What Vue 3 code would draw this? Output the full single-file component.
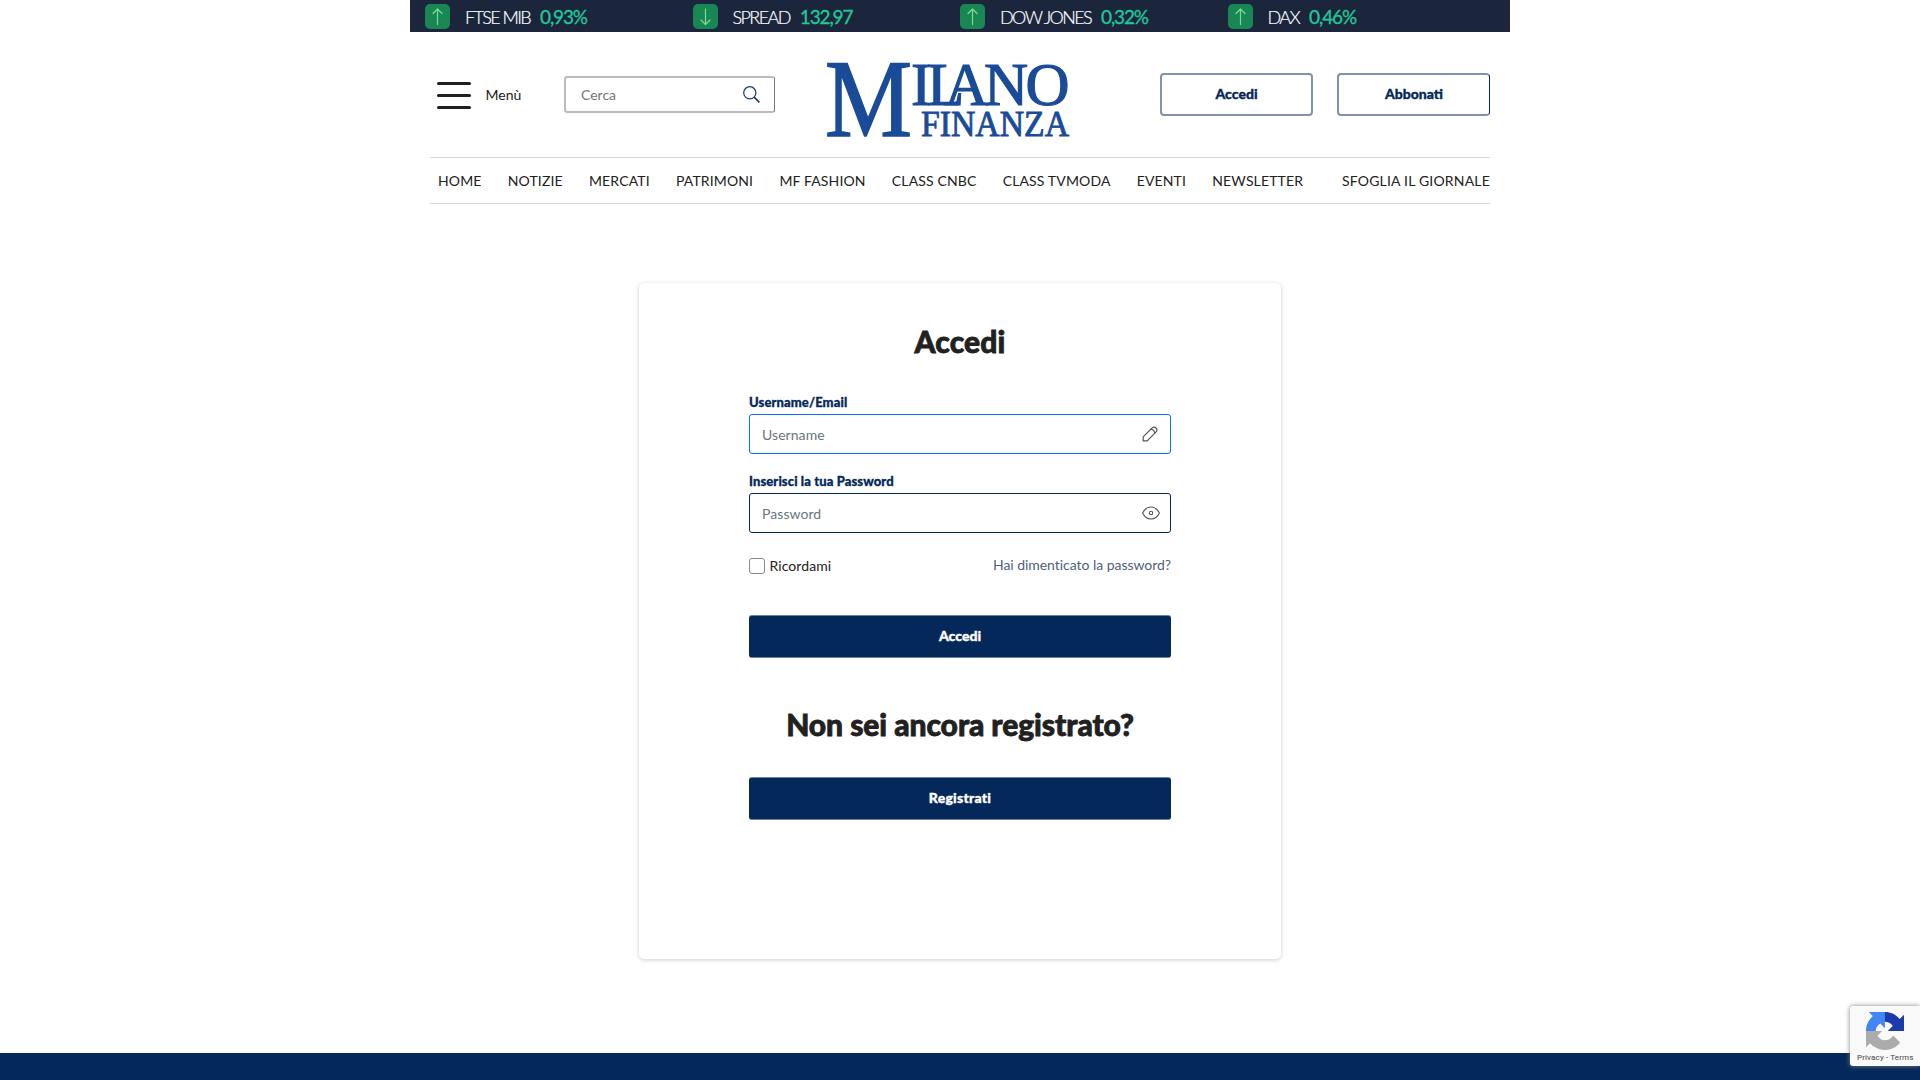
<script setup>
const quotes = [
  { name: 'FTSE MIB', value: '0,93%', down: false },
  { name: 'SPREAD', value: '132,97', down: true },
  { name: 'DOW JONES', value: '0,32%', down: false },
  { name: 'DAX', value: '0,46%', down: false },
]
const sections = ['HOME', 'NOTIZIE', 'MERCATI', 'PATRIMONI', 'MF FASHION', 'CLASS CNBC', 'CLASS TVMODA', 'EVENTI', 'NEWSLETTER']
</script>

<template>
  <div class="page">
    <div class="ticker">
      <div v-for="q in quotes" :key="q.name" class="quote">
        <span class="badge">
          <svg viewBox="0 0 25 25" width="25" height="25" fill="none" stroke="#7fd88f" stroke-width="1.2" stroke-linecap="round" stroke-linejoin="round">
            <path v-if="q.down" d="M12.5 5v15.5M8 16l4.5 4.5L17 16" />
            <path v-else d="M12.5 20.5V5M8 9.5L12.5 5L17 9.5" />
          </svg>
        </span>
        <span class="qname">{{ q.name }}</span>
        <span class="qvalue">{{ q.value }}</span>
      </div>
    </div>

    <header class="wrap">
      <div class="top">
        <div class="menu"><i></i><i></i><i></i></div>
        <span class="menu-label">Menù</span>
        <div class="search">
          <span>Cerca</span>
          <svg viewBox="0 0 17 17" width="17" height="17" fill="none" stroke="#1b3a6b" stroke-width="1.25">
            <circle cx="6.8" cy="6.8" r="6.1" />
            <path d="M11.1 11.1L16.4 16.4" stroke-width="1.6" />
          </svg>
        </div>
        <svg class="logo" viewBox="0 0 246 80" width="246" height="80">
          <text class="big" x="0" y="76" textLength="87" lengthAdjust="spacingAndGlyphs">M</text>
          <text class="mid" x="86 102 119.5 159 200.5" y="44.5">ILANO</text>
          <text class="low" x="96" y="76" textLength="148" lengthAdjust="spacingAndGlyphs">FINANZA</text>
        </svg>
        <div class="btns">
          <button class="outline">Accedi</button>
          <button class="outline last">Abbonati</button>
        </div>
      </div>
      <nav class="nav">
        <a v-for="s in sections" :key="s">{{ s }}</a>
        <a class="paper">SFOGLIA IL GIORNALE</a>
      </nav>
    </header>

    <main class="card">
      <h1>Accedi</h1>
      <label>Username/Email</label>
      <div class="field focus">
        <span>Username</span>
        <svg class="pencil" viewBox="0 0 16 16" width="16" height="16" fill="none" stroke="#555" stroke-width="1.2" stroke-linejoin="round">
          <path d="M1.2 14.8V10.8L9.9 2.1Q12 .2 14 2T13.9 6.1L5.2 14.8ZM8.8 3.2Q12 3.6 12.8 7.2" />
        </svg>
      </div>
      <label>Inserisci la tua Password</label>
      <div class="field">
        <span>Password</span>
        <svg class="eye" viewBox="0 0 18 14" width="18" height="14" fill="none" stroke="#555" stroke-width="1.1">
          <path d="M.6 7C2.5 3 5.5 1 9 1s6.5 2 8.4 6c-1.9 4-4.9 6-8.4 6S2.5 11 .6 7z" />
          <circle cx="9" cy="7" r="1.7" />
        </svg>
      </div>
      <div class="options">
        <span class="remember"><i class="check"></i>Ricordami</span>
        <a>Hai dimenticato la password?</a>
      </div>
      <button class="solid">Accedi</button>
      <h2>Non sei ancora registrato?</h2>
      <button class="solid wide">Registrati</button>
    </main>

    <footer></footer>

    <aside class="captcha">
      <svg viewBox="0 0 64 64" width="38" height="38">
        <path fill="#1c3aa9" d="M64 31.955l-.033-1.370V4.687l-7.160 7.160C50.948 4.674 42.033.093 32.050.093c-10.400 0-19.622 4.960-25.458 12.640l11.736 11.860a15.550 15.550 0 0 1 4.754-5.334c2.050-1.600 4.952-2.906 8.968-2.906.485 0 .860.057 1.135.163 4.976.393 9.288 3.140 11.828 7.124l-8.307 8.307L64 31.953" />
        <path fill="#4285f4" d="M31.862.094l-1.370.033H4.594l7.160 7.160C4.580 13.147 0 22.060 0 32.046c0 10.400 4.960 19.622 12.640 25.458L24.500 45.768a15.550 15.550 0 0 1-5.334-4.754c-1.600-2.050-2.906-4.952-2.906-8.968 0-.485.057-.860.163-1.135.393-4.976 3.140-9.288 7.124-11.828l8.307 8.307L31.860.095" />
        <path fill="#ababab" d="M.001 32.045l.033 1.370v25.898l7.160-7.160c5.860 7.173 14.774 11.754 24.760 11.754 10.400 0 19.622-4.960 25.458-12.640l-11.736-11.860a15.550 15.550 0 0 1-4.754 5.334c-2.050 1.600-4.952 2.906-8.968 2.906-.485 0-.860-.057-1.135-.163-4.976-.393-9.288-3.140-11.828-7.124l8.307-8.307c-10.522.040-22.400.066-27.295-.005" />
      </svg>
      <p>Privacy - Terms</p>
    </aside>
  </div>
</template>

<style>
body { margin: 0; background: #fff; }
</style>

<style scoped>
* { box-sizing: border-box; }
.page { height: 1080px; overflow: hidden; position: relative; display: flex; flex-direction: column; align-items: center; font: 14px/20px Lato, sans-serif; color: #212121; }
.ticker { flex: none; width: 1100px; height: 32px; padding: 4px 0 0 15px; display: flex; background: #1b263d; }
.quote { width: 267.5px; height: 25px; display: flex; align-items: center; font-size: 18px; letter-spacing: -1.6px; white-space: nowrap; }
.badge { width: 25px; height: 25px; border-radius: 5px; background: #198754; margin-right: 15px; }
.badge svg { display: block; }
.qname { color: #fff; font-weight: 300; -webkit-text-stroke: .2px #fff; }
.qvalue { color: #20c997; margin-left: 10px; font-size: 19px; letter-spacing: -1.15px; -webkit-text-stroke: .3px #20c997; }
.wrap { width: 1060px; flex: none; }
.top { height: 125px; display: flex; align-items: flex-start; }
.menu { width: 34px; height: 27px; margin: 49.5px 0 0 7px; display: flex; flex-direction: column; justify-content: space-between; }
.menu i { height: 3px; border-radius: 2px; background: #212121; }
.menu-label { width: 78.5px; margin: 53px 0 0 14.5px; }
.search { width: 211px; height: 37px; margin-top: 44px; padding: 0 14px 0 15px; display: flex; align-items: center; justify-content: space-between; border: 2px solid #bbb; border-right: 1px solid #777; border-radius: 3px; color: #757575; }
.logo { margin: 28px 0 0 50px; font-family: "Liberation Serif", serif; fill: #1a4b98; stroke: #1a4b98; overflow: visible; }
.big { font-size: 111px; stroke-width: 1.6px; }
.mid { font-size: 61px; stroke-width: 1.2px; }
.low { font-size: 36px; stroke-width: .9px; }
.btns { margin: 41px 0 0 auto; display: flex; gap: 24px; }
button { font: 900 14px/20px Lato, sans-serif; padding: 0 0 1px; -webkit-text-stroke: .35px currentColor; }
.outline { width: 153px; height: 43px; background: #fff; color: #04285a; border: 2px solid #8193ac; border-radius: 4px; }
.last { border-right: 1px solid #04285a; }
.nav { height: 47px; padding-left: 8px; display: flex; align-items: center; gap: 26.2px; border: solid #d6d6d6; border-width: 1px 0; white-space: nowrap; letter-spacing: .14px; }
.paper { margin-left: auto; letter-spacing: .19px; }
.card { flex: none; width: 642px; height: 676px; margin-top: 79px; padding: 0 110px; background: #fff; border-radius: 5px; box-shadow: 0 1px 4px rgba(0, 0, 0, .2); }
h1, h2 { margin: 0; text-align: center; font: 900 30px/36px Lato, sans-serif; color: #212121; -webkit-text-stroke: .8px #212121; }
h1 { margin-top: 40px; margin-bottom: 33px; letter-spacing: .1px; }
label { display: block; height: 22px; font-size: 13px; font-weight: 900; color: #04285a; letter-spacing: .11px; -webkit-text-stroke: .3px #04285a; }
.field { height: 40px; margin-bottom: 17px; padding: 0 10px 0 12px; display: flex; align-items: center; justify-content: space-between; border: 1px solid #04285a; border-radius: 3px; color: #6c757d; letter-spacing: .06px; }
.field span { padding-top: 2px; }
.focus { border-color: #0d6efd; }
.pencil { margin-right: 2px; }
.options { display: flex; justify-content: space-between; margin-top: 22px; height: 60px; }
.options a { color: #4f617e; letter-spacing: -.04px; }
.remember { display: flex; align-items: center; height: 22px; letter-spacing: .08px; }
.check { width: 16px; height: 16px; margin-right: 4.5px; border: 1px solid #888; border-radius: 3px; }
.solid { display: block; width: 100%; height: 43px; border: 1px solid #6f84a3; border-width: 1px 0; border-radius: 3px; background: #04285a; color: #fff; }
.wide { letter-spacing: .25px; }
h2 { margin: 48px 0 35px; letter-spacing: -.06px; }
footer { align-self: stretch; flex: none; margin-top: 94px; height: 27px; background: #04285a; }
.captcha { position: absolute; right: 0; bottom: 14px; width: 70px; height: 60px; padding: 6px 0 0 16px; background: #f9f9f9; border-radius: 3px 0 0 3px; box-shadow: 0 0 5px gray; }
.captcha svg { display: block; }
.captcha p { margin: 3px 0 0 -9px; font: 8px/10px Roboto, sans-serif; letter-spacing: .14px; white-space: nowrap; color: #444; }
</style>
